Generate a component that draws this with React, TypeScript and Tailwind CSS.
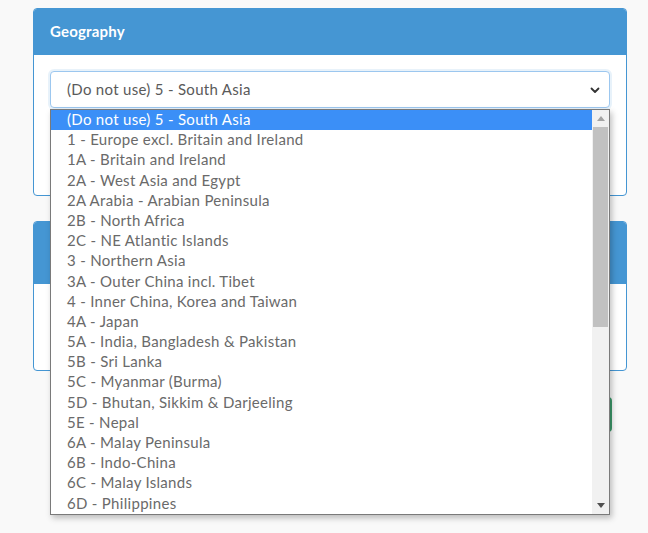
const regions = [
  "(Do not use) 5 - South Asia",
  "1 - Europe excl. Britain and Ireland",
  "1A - Britain and Ireland",
  "2A - West Asia and Egypt",
  "2A Arabia - Arabian Peninsula",
  "2B - North Africa",
  "2C - NE Atlantic Islands",
  "3 - Northern Asia",
  "3A - Outer China incl. Tibet",
  "4 - Inner China, Korea and Taiwan",
  "4A - Japan",
  "5A - India, Bangladesh & Pakistan",
  "5B - Sri Lanka",
  "5C - Myanmar (Burma)",
  "5D - Bhutan, Sikkim & Darjeeling",
  "5E - Nepal",
  "6A - Malay Peninsula",
  "6B - Indo-China",
  "6C - Malay Islands",
  "6D - Philippines",
];

const font = { fontFamily: "Lato, 'Open Sans', sans-serif" };

export default function App() {
  return (
    <div className="relative min-h-[533px] w-[648px] bg-[#f9f9f9] pt-2" style={font}>
      {/* Geography card */}
      <div className="ml-[33px] w-[594px] rounded-[4px] border border-[#4596d3] bg-white">
        <div className="h-[46px] rounded-t-[3px] bg-[#4596d3] px-4 flex items-center">
          <span className="-mt-[2px] text-[15px] font-bold tracking-[0.2px] text-white">Geography</span>
        </div>
        <div className="h-[140px] px-4 pt-4">
          <div className="flex h-[37px] items-center justify-between rounded-[4px] border border-[#9cc7ef] bg-white pl-4 pr-2 shadow-[0_0_0_2px_rgba(69,150,211,0.12)]">
            <span className="text-[15px] tracking-[0.3px] text-[#5a5a5a]">(Do not use) 5 - South Asia</span>
            <svg width="12" height="12" viewBox="0 0 12 12" fill="none">
              <path d="M2.5 4.5 6 8l3.5-3.5" stroke="#333" strokeWidth="1.8" strokeLinecap="round" strokeLinejoin="round" />
            </svg>
          </div>
        </div>
      </div>

      {/* second card */}
      <div className="ml-[33px] mt-[25px] w-[594px] rounded-[4px] border border-[#4596d3] bg-white">
        <div className="h-[62px] rounded-t-[3px] bg-[#4596d3]" />
        <div className="h-[86px]" />
      </div>

      <div className="ml-[33px] mt-[26px] flex w-[579px] justify-end">
        <div className="h-[35px] w-[120px] rounded-[4px] bg-[#3d9a6c]" />
      </div>

      {/* open dropdown list */}
      <div className="absolute left-[50px] top-[109px] flex w-[560px] border border-[#7a7a7a] bg-white shadow-[2px_3px_6px_rgba(0,0,0,0.25)]">
        <div className="flex-1">
          {regions.map((r, i) => (
            <div
              key={r}
              className={
                i === 0
                  ? "h-[20.2px] bg-[#3b8ff7] pl-4 text-[15px] leading-[19px] tracking-[0.3px] text-white"
                  : "h-[20.2px] pl-4 text-[15px] leading-[19px] tracking-[0.3px] text-[#6a6a6a]"
              }
            >
              {r}
            </div>
          ))}
        </div>
        <div className="flex w-[17px] flex-col bg-[#f1f1f1]">
          <div className="flex h-[17px] items-center justify-center">
            <svg width="8" height="5" viewBox="0 0 8 5">
              <path d="M0 5 4 0l4 5z" fill="#a3a3a3" />
            </svg>
          </div>
          <div className="mx-[1px] h-[200px] bg-[#c1c1c1]" />
          <div className="flex-1" />
          <div className="flex h-[17px] items-center justify-center">
            <svg width="8" height="5" viewBox="0 0 8 5">
              <path d="M0 0h8L4 5z" fill="#505050" />
            </svg>
          </div>
        </div>
      </div>
    </div>
  );
}
